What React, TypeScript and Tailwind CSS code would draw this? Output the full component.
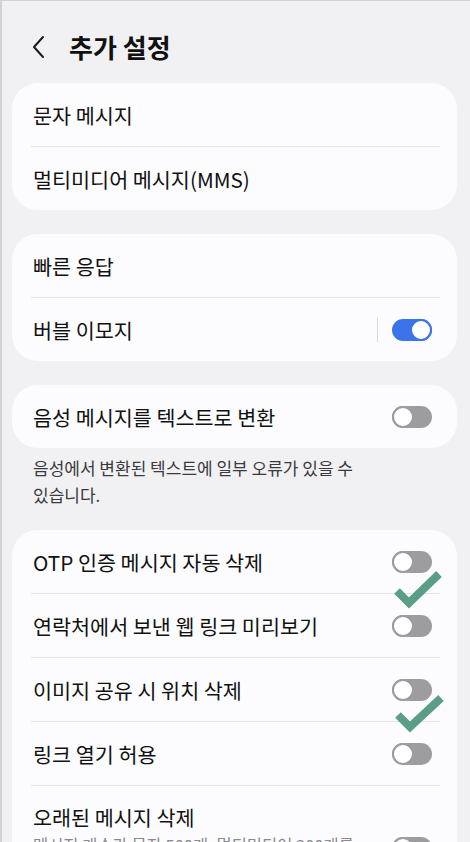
import React from 'react'

const font = { fontFamily: '"Noto Sans CJK KR", "Noto Sans", sans-serif' }

function Toggle({ on = false }: { on?: boolean }) {
  if (on) {
    return (
      <div className="flex h-[22px] w-[40px] items-center justify-end rounded-full bg-[#3b74e9]">
        <div className="h-[22px] w-[22px] rounded-full border-[2.5px] border-[#3b74e9] bg-white" />
      </div>
    )
  }
  return (
    <div className="flex h-[22px] w-[40px] items-center justify-start rounded-full bg-[#9d9da1]">
      <div className="h-[22px] w-[22px] rounded-full border-[2.5px] border-[#9d9da1] bg-white" />
    </div>
  )
}

function Divider() {
  return <div className="ml-[19px] mr-[17px] h-px bg-[#e3e3e6]" />
}

function Row({ label, toggle, on, sep }: { label: string; toggle?: boolean; on?: boolean; sep?: boolean }) {
  return (
    <div className="flex h-[63px] items-center pl-[21px] pr-[25px]">
      <span className="flex-1 text-[20.7px] leading-[28px] text-[#111111]">{label}</span>
      {sep && <div className="mr-[14px] h-[24px] w-px bg-[#d9d9dc]" />}
      {toggle && <Toggle on={on} />}
    </div>
  )
}

function Card({ children }: { children: React.ReactNode }) {
  return <div className="ml-[12px] mr-[13px] overflow-hidden rounded-[26px] bg-[#fcfcfe]">{children}</div>
}

export default function App() {
  return (
    <div
      style={font}
      className="relative h-[842px] w-[470px] overflow-hidden bg-[#f1f1f3] shadow-[inset_2px_1px_0_#d2d2d5]"
    >
      <div className="flex h-[83px] items-center pl-[31px] pt-[10px]">
        <svg width="16" height="24" viewBox="0 0 16 24" fill="none">
          <path d="M12 2 L3 12 L12 22" stroke="#1a1a1a" strokeWidth="2" strokeLinecap="round" strokeLinejoin="round" />
        </svg>
        <h1 className="ml-[22px] text-[26px] font-bold leading-[34px] text-[#111111]">추가 설정</h1>
      </div>

      <Card>
        <Row label="문자 메시지" />
        <Divider />
        <Row label="멀티미디어 메시지(MMS)" />
      </Card>

      <div className="h-[24px]" />
      <Card>
        <Row label="빠른 응답" />
        <Divider />
        <Row label="버블 이모지" toggle on sep />
      </Card>

      <div className="h-[24px]" />
      <Card>
        <Row label="음성 메시지를 텍스트로 변환" toggle />
      </Card>

      <p className="w-[400px] break-keep pb-[22px] pl-[33px] pt-[6px] text-[17px] leading-[27px] text-[#3a3a3c]">
        음성에서 변환된 텍스트에 일부 오류가 있을 수 있습니다.
      </p>

      <Card>
        <Row label="OTP 인증 메시지 자동 삭제" toggle />
        <Divider />
        <Row label="연락처에서 보낸 웹 링크 미리보기" toggle />
        <Divider />
        <Row label="이미지 공유 시 위치 삭제" toggle />
        <Divider />
        <Row label="링크 열기 허용" toggle />
        <Divider />
        <div className="flex items-start pb-[18px] pl-[21px] pr-[25px] pt-[17px]">
          <div className="flex-1 break-keep">
            <div className="text-[20.7px] leading-[28px] text-[#111111]">오래된 메시지 삭제</div>
            <div className="mt-[3px] text-[16.5px] leading-[23px] text-[#8a8a8e]">
              메시지 개수가 문자 500개, 멀티미디어 300개를 넘으면 오래된 메시지를 삭제합니다.
            </div>
          </div>
          <div className="ml-[16px] mt-[34px]">
            <Toggle />
          </div>
        </div>
      </Card>

      {/* check marks drawn over the screenshot */}
      <svg className="pointer-events-none absolute left-0 top-0" width="470" height="842" viewBox="0 0 470 842">
        <polyline points="397,591 409,603 439,574" fill="none" stroke="#5a9e88" strokeWidth="8" />
        <polyline points="398,715 410,727 441,698" fill="none" stroke="#5a9e88" strokeWidth="8" />
      </svg>
    </div>
  )
}
